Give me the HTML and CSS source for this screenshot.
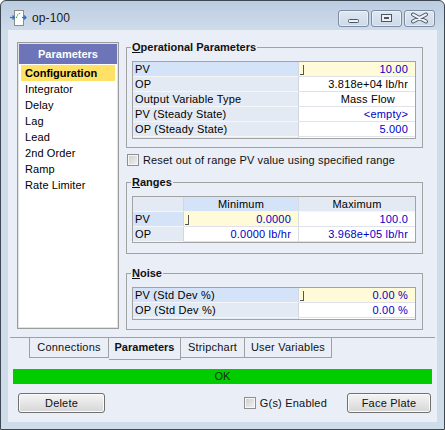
FILE: index.html
```html
<!DOCTYPE html>
<html>
<head>
<meta charset="utf-8">
<link rel="stylesheet" href="styles.css">
</head>
<body>
<div class="window">
  <div class="titlebar">
    <svg class="app-icon" width="18" height="18" viewBox="0 0 18 18">
      <rect x="5.5" y="1.5" width="9" height="15" fill="#fff" stroke="#8c8c8c"/>
      <path d="M7.5 9 Q8 4.5 12.5 4" fill="none" stroke="#3cc43c" stroke-width="1.2" stroke-dasharray="1.5 1"/>
      <path d="M1 8.5 H5" stroke="#2a6fd0" stroke-width="1.2"/>
      <path d="M3.5 6.5 L5.5 8.5 L3.5 10.5" fill="none" stroke="#2a6fd0" stroke-width="1.2"/>
      <path d="M13 8.5 H17" stroke="#2a6fd0" stroke-width="1.2"/>
      <path d="M15 6.5 L17 8.5 L15 10.5" fill="none" stroke="#2a6fd0" stroke-width="1.2"/>
    </svg>
    <span class="title">op-100</span>
    <div class="caption-btns">
      <div class="cbtn">
        <svg width="29" height="15" viewBox="0 0 29 15"><rect x="9.5" y="8.5" width="10" height="3" rx="1" fill="#eef2f7" stroke="#4b5666"/></svg>
      </div>
      <div class="cbtn">
        <svg width="29" height="15" viewBox="0 0 29 15"><rect x="9.5" y="3.5" width="10" height="7" fill="#eef2f7" stroke="#4b5666"/><rect x="12.5" y="6.5" width="4" height="1" fill="none" stroke="#4b5666"/></svg>
      </div>
      <div class="cbtn">
        <svg width="29" height="15" viewBox="0 0 29 15"><path d="M8 3.5 L21 10.5 M8 10.5 L21 3.5" stroke="#4b5666" stroke-width="4" stroke-linecap="round"/><path d="M8 3.5 L21 10.5 M8 10.5 L21 3.5" stroke="#eef2f7" stroke-width="2" stroke-linecap="round"/></svg>
      </div>
    </div>
  </div>
  <div class="client">
    <div class="main">
      <div class="navlist">
        <div class="nav-head">Parameters</div>
        <div class="nav-item selected">Configuration</div>
        <div class="nav-item">Integrator</div>
        <div class="nav-item">Delay</div>
        <div class="nav-item">Lag</div>
        <div class="nav-item">Lead</div>
        <div class="nav-item">2nd Order</div>
        <div class="nav-item">Ramp</div>
        <div class="nav-item">Rate Limiter</div>
      </div>
      <div class="content">
        <fieldset class="group g-op">
          <legend><u>O</u>perational Parameters</legend>
          <div class="grid cols-2">
            <div class="c lbl sel">PV</div><div class="c val yel blue"><span class="caret"></span><span>10.00</span></div>
            <div class="c lbl">OP</div><div class="c val">3.818e+04 lb/hr</div>
            <div class="c lbl">Output Variable Type</div><div class="c val combo">Mass Flow</div>
            <div class="c lbl">PV (Steady State)</div><div class="c val blue">&lt;empty&gt;</div>
            <div class="c lbl">OP (Steady State)</div><div class="c val blue">5.000</div>
            <div class="fill lbl"></div><div class="fill"></div>
          </div>
        </fieldset>
        <label class="check-row"><span class="checkbox"></span><span>Reset out of range PV value using specified range</span></label>
        <fieldset class="group g-rng">
          <legend><u>R</u>anges</legend>
          <div class="grid cols-3">
            <div class="c lbl head"></div><div class="c lbl head sel mid">Minimum</div><div class="c lbl head last">Maximum</div>
            <div class="c lbl sel">PV</div><div class="c val yel blue mid"><span class="caret"></span><span>0.0000</span></div><div class="c val blue">100.0</div>
            <div class="c lbl">OP</div><div class="c val blue mid">0.0000 lb/hr</div><div class="c val blue">3.968e+05 lb/hr</div>
          </div>
        </fieldset>
        <fieldset class="group g-noise">
          <legend><u>N</u>oise</legend>
          <div class="grid cols-2">
            <div class="c lbl sel">PV (Std Dev %)</div><div class="c val yel blue"><span class="caret"></span><span>0.00 %</span></div>
            <div class="c lbl">OP (Std Dev %)</div><div class="c val blue">0.00 %</div>
            <div class="fill lbl"></div><div class="fill"></div>
          </div>
        </fieldset>
      </div>
    </div>
    <div class="tabstrip">
      <div class="tab first w-conn">Connections</div>
      <div class="tab active w-par">Parameters</div>
      <div class="tab w-strip">Stripchart</div>
      <div class="tab w-uv">User Variables</div>
    </div>
    <div class="status">OK</div>
    <div class="footer">
      <div class="btn w-del">Delete</div>
      <div class="spacer"></div>
      <label class="gs"><span class="checkbox"></span><span>G(s) Enabled</span></label>
      <div class="btn w-face">Face Plate</div>
    </div>
  </div>
</div>
</body>
</html>
```

FILE: styles.css
```css
* { box-sizing: border-box; }
html, body { margin: 0; padding: 0; }
body {
  width: 445px;
  height: 430px;
  overflow: hidden;
  background: #ffffff;
  font-family: "Liberation Sans", Arial, sans-serif;
  font-size: 11px;
  color: #000;
}

.window {
  width: 445px;
  height: 430px;
  border: 1px solid #3e4853;
  border-radius: 6px 6px 0 0;
  background: linear-gradient(#bccde1, #cfdcea 30px, #cfdcea);
  padding: 0 7px 7px;
  display: flex;
  flex-direction: column;
}

/* title bar */
.titlebar {
  height: 29px;
  padding-top: 5px;
  display: flex;
  align-items: center;
  flex-shrink: 0;
}
.app-icon { margin-left: 1px; margin-right: 5px; flex-shrink: 0; }
.title { font-size: 12px; color: #1b1b1b; letter-spacing: 0.1px; }
.caption-btns {
  margin-left: auto;
  margin-right: 2px;
  display: flex;
  gap: 2px;
}
.cbtn {
  width: 31px;
  height: 17px;
  border: 1px solid #7e8ca3;
  border-radius: 3px;
  background: linear-gradient(#dfe8f2, #ccd9e7);
  box-shadow: inset 0 0 0 1px rgba(255,255,255,0.45);
}
.cbtn svg { display: block; }

/* client */
.client {
  flex: 1;
  background: #e9eef7;
  display: flex;
  flex-direction: column;
}
.main {
  height: 307px;
  flex-shrink: 0;
  display: flex;
  align-items: flex-start;
  padding-left: 9px;
}

/* left list */
.navlist {
  margin-top: 12px;
  width: 102px;
  height: 287px;
  border: 1px solid #9c9c9c;
  padding: 1px;
  background: #fff;
  box-shadow: inset 0 0 0 1px #e2e2e2;
}
.nav-head {
  height: 20px;
  line-height: 20px;
  background: #6d75b8;
  color: #fff;
  font-weight: bold;
  text-align: center;
  margin-bottom: 1px;
}
.nav-item {
  height: 16px;
  line-height: 16px;
  margin: 0 2px;
  padding-left: 4px;
  white-space: nowrap;
  letter-spacing: 0.1px;
}
.nav-item.selected {
  background: #ffe166;
  font-weight: bold;
  letter-spacing: 0;
}

/* right content */
.content {
  margin-top: 10px;
  margin-left: 7px;
  width: 297px;
  display: flex;
  flex-direction: column;
}
.group {
  margin: 0;
  border: 1px solid #a2a2a2;
  padding: 6px 6px 8px 5px;
  min-width: 0;
}
.group legend {
  font-weight: bold;
  line-height: 15px;
  height: 15px;
  padding: 0 1px;
  margin-left: -1px;
  color: #111;
}
.group legend u { text-decoration: underline; text-underline-offset: 1px; }
.g-rng { margin-top: 7px; padding-bottom: 10px; }
.g-noise { margin-top: 12px; padding-bottom: 9px; }

.check-row {
  margin-top: 4px;
  height: 16px;
  display: flex;
  align-items: center;
  padding-left: 1px;
  color: #111;
  letter-spacing: 0.15px;
}
.checkbox {
  width: 12px;
  height: 12px;
  border: 1px solid #8e8f90;
  background: linear-gradient(135deg, #cdcdcd, #f2f2f2);
  box-shadow: inset 0 0 0 1px #f6f6f6;
  margin-right: 4px;
  flex-shrink: 0;
}

/* property grids */
.grid {
  display: grid;
  border: 1px solid #a3a3a3;
  background: #fff;
  letter-spacing: 0.2px;
}
.cols-2 { grid-template-columns: 166px 1fr; }
.cols-3 { grid-template-columns: 51px 115px 1fr; }
.c {
  height: 15px;
  line-height: 14px;
  border-bottom: 1px solid #dfe3e9;
  white-space: nowrap;
  overflow: hidden;
}
.lbl {
  background: #e4eaf3;
  border-right: 1px solid #d0d7e1;
  border-bottom-color: #f4f6fa;
  padding-left: 2px;
}
.lbl.sel { background: #d4e3f7; }
.head { text-align: center; padding-left: 0; border-bottom-color: #f4f6fa; }
.head.last { border-right: none; }
.mid { border-right: 1px solid #d8dde4; }
.val {
  display: flex;
  justify-content: flex-end;
  align-items: center;
  padding-right: 7px;
}
.val.combo { padding-right: 20px; }
.yel {
  background: #fffad7;
  justify-content: space-between;
}
.blue { color: #0000c8; }
.caret {
  width: 4px;
  height: 10px;
  border-right: 1px solid #555;
  border-bottom: 1px solid #555;
  margin-left: 1px;
  margin-top: 1px;
}
.fill { height: 1px; }
.fill.lbl { padding: 0; }

/* tabs */
.tabstrip {
  margin: 0 2px;
  border-top: 1px solid #a0a0a0;
  height: 23px;
  padding-left: 19px;
  display: flex;
  align-items: flex-start;
  flex-shrink: 0;
}
.tab {
  height: 20px;
  line-height: 18px;
  text-align: center;
  border-right: 1px solid #a0a0a0;
  border-bottom: 1px solid #a0a0a0;
  color: #111;
  white-space: nowrap;
  letter-spacing: 0.2px;
}
.tab.first { border-left: 1px solid #a0a0a0; }
.tab.active { height: 22px; font-weight: bold; line-height: 19px; letter-spacing: 0; }
.w-conn { width: 80px; }
.w-par { width: 72px; }
.w-strip { width: 64px; }
.w-uv { width: 87px; }

/* status bar */
.status {
  margin: 9px 5px 0;
  height: 15px;
  line-height: 15px;
  background: #00cc00;
  text-align: center;
  color: #163016;
  flex-shrink: 0;
}

/* footer */
.footer {
  margin-top: 9px;
  height: 20px;
  display: flex;
  align-items: center;
  padding: 0 6px 0 10px;
  letter-spacing: 0.2px;
}
.spacer { flex: 1; }
.btn {
  height: 20px;
  line-height: 18px;
  text-align: center;
  border: 1px solid #707070;
  border-radius: 3px;
  background: linear-gradient(#f4f4f4, #e6e6e6 50%, #d6d6d6);
  box-shadow: inset 0 0 0 1px #fbfbfb;
  color: #111;
}
.w-del { width: 87px; }
.w-face { width: 84px; }
.gs {
  display: flex;
  align-items: center;
  margin-right: 20px;
  color: #111;
}
```
